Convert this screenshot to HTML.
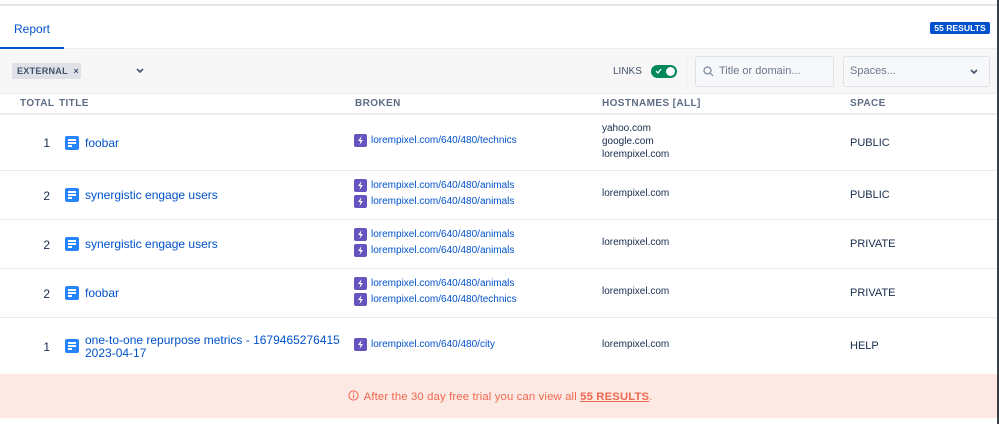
<!DOCTYPE html>
<html><head><meta charset="utf-8"><style>
*{margin:0;padding:0;box-sizing:border-box}
body{width:999px;height:424px;background:#fff;font-family:"Liberation Sans",sans-serif;position:relative;overflow:hidden;color:#172b4d}
.a{position:absolute}
.hl{position:absolute;left:0;width:997px;height:1px;background:#ebecf0}
.th{position:absolute;top:98px;font-size:10px;font-weight:bold;color:#5e6c84;letter-spacing:.4px}
.num{position:absolute;left:38px;width:12px;text-align:right;font-size:12px;color:#172b4d}
.doc{position:absolute;left:65px;width:14px;height:14px;background:#2684ff;border-radius:2px}
.doc:before{content:"";position:absolute;left:3px;top:3px;width:8px;height:2px;background:#fff;box-shadow:0 3px 0 #fff,0 6px 0 #fff}
.doc:after{content:"";position:absolute;left:7px;top:9px;width:4px;height:2px;background:#2684ff}
.t{position:absolute;left:85px;font-size:12px;color:#0052cc;line-height:13px}
.lk{position:absolute;left:354px;font-size:10px;color:#0052cc;height:13px;line-height:13px;padding-left:17px}
.lk:before{content:"";position:absolute;left:0;top:0;width:13px;height:13px;background:#6554c0;border-radius:2px}
.lk svg{position:absolute;left:3px;top:2px}
.h{position:absolute;left:602px;font-size:10px;color:#172b4d;line-height:13px}
.s{position:absolute;left:850px;font-size:11px;color:#172b4d}
</style></head><body>
<div class="a" style="left:0;top:4px;width:997px;height:2px;background:#e4e5e9"></div>
<div class="a" style="left:997px;top:0;width:2px;height:424px;background:#3a3f47"></div>
<div class="a" style="left:14px;top:22px;font-size:12px;color:#0052cc">Report</div>
<div class="a" style="left:930px;top:22px;width:60px;height:12px;background:#0052cc;border-radius:2px;color:#fff;font-size:8.6px;font-weight:bold;text-align:center;line-height:12px;white-space:nowrap">55 RESULTS</div>
<div class="a" style="left:0;top:48px;width:997px;height:45px;background:#f7f7f8;border-top:1px solid #ebecf0"></div>
<div class="a" style="left:0;top:47px;width:64px;height:2px;background:#0052cc"></div>
<div class="a" style="left:12px;top:63px;width:69px;height:16px;background:#dfe1e6;border-radius:2px;font-size:9px;font-weight:bold;color:#42526e;line-height:16px;padding-left:5px;letter-spacing:.3px">EXTERNAL <span style="margin-left:3px">×</span></div>
<svg class="a" style="left:136px;top:68px" width="8" height="6"><path d="M1 1l3 3 3-3" stroke="#42526e" stroke-width="1.6" fill="none"/></svg>
<div class="a" style="left:613px;top:66px;font-size:10px;color:#42526e">LINKS</div>
<div class="a" style="left:651px;top:65px;width:26px;height:13px;background:#00875a;border-radius:7px"></div>
<div class="a" style="left:666px;top:67px;width:9px;height:9px;background:#fff;border-radius:50%"></div>
<svg class="a" style="left:655px;top:68px" width="7" height="6"><path d="M1 3l2 2 3-4" stroke="#fff" stroke-width="1.3" fill="none"/></svg>
<div class="a" style="left:686px;top:55px;width:1px;height:34px;background:#ebecf0"></div>
<div class="a" style="left:695px;top:56px;width:139px;height:31px;border:1px solid #dfe1e6;background:#f7f8f9;border-radius:3px"></div>
<svg class="a" style="left:703px;top:66px" width="11" height="11"><circle cx="4.5" cy="4.5" r="3.5" stroke="#7a869a" stroke-width="1.2" fill="none"/><path d="M7 7l3 3" stroke="#7a869a" stroke-width="1.2"/></svg>
<div class="a" style="left:719px;top:65px;font-size:11px;color:#6b778c">Title or domain...</div>
<div class="a" style="left:843px;top:56px;width:147px;height:31px;border:1px solid #dfe1e6;background:#f7f8f9;border-radius:3px"></div>
<div class="a" style="left:850px;top:65px;font-size:11px;color:#6b778c">Spaces...</div>
<svg class="a" style="left:970px;top:69px" width="8" height="6"><path d="M1 1l3 3 3-3" stroke="#42526e" stroke-width="1.6" fill="none"/></svg>
<div class="hl" style="top:93px"></div>
<div class="th" style="left:20px">TOTAL</div><div class="th" style="left:59px">TITLE</div>
<div class="th" style="left:355px">BROKEN</div><div class="th" style="left:602px">HOSTNAMES [ALL]</div><div class="th" style="left:850px">SPACE</div>
<div class="hl" style="top:113px;height:2px"></div>

<div class="num" style="top:136px">1</div><div class="doc" style="top:136px"></div><div class="t" style="top:137px">foobar</div>
<div class="lk" style="top:134px"><svg width="7" height="9"><path d="M4.5 0L1 5h2.5L2.5 9 6 4H3.5z" fill="#fff"/></svg>lorempixel.com/640/480/technics</div>
<div class="h" style="top:122px">yahoo.com<br>google.com<br>lorempixel.com</div>
<div class="s" style="top:137px">PUBLIC</div>
<div class="hl" style="top:170px"></div>

<div class="num" style="top:189px">2</div><div class="doc" style="top:188px"></div><div class="t" style="top:189px">synergistic engage users</div>
<div class="lk" style="top:179px"><svg width="7" height="9"><path d="M4.5 0L1 5h2.5L2.5 9 6 4H3.5z" fill="#fff"/></svg>lorempixel.com/640/480/animals</div>
<div class="lk" style="top:195px"><svg width="7" height="9"><path d="M4.5 0L1 5h2.5L2.5 9 6 4H3.5z" fill="#fff"/></svg>lorempixel.com/640/480/animals</div>
<div class="h" style="top:187px">lorempixel.com</div>
<div class="s" style="top:189px">PUBLIC</div>
<div class="hl" style="top:219px"></div>

<div class="num" style="top:238px">2</div><div class="doc" style="top:237px"></div><div class="t" style="top:238px">synergistic engage users</div>
<div class="lk" style="top:228px"><svg width="7" height="9"><path d="M4.5 0L1 5h2.5L2.5 9 6 4H3.5z" fill="#fff"/></svg>lorempixel.com/640/480/animals</div>
<div class="lk" style="top:244px"><svg width="7" height="9"><path d="M4.5 0L1 5h2.5L2.5 9 6 4H3.5z" fill="#fff"/></svg>lorempixel.com/640/480/animals</div>
<div class="h" style="top:236px">lorempixel.com</div>
<div class="s" style="top:238px">PRIVATE</div>
<div class="hl" style="top:268px"></div>

<div class="num" style="top:287px">2</div><div class="doc" style="top:286px"></div><div class="t" style="top:287px">foobar</div>
<div class="lk" style="top:277px"><svg width="7" height="9"><path d="M4.5 0L1 5h2.5L2.5 9 6 4H3.5z" fill="#fff"/></svg>lorempixel.com/640/480/animals</div>
<div class="lk" style="top:293px"><svg width="7" height="9"><path d="M4.5 0L1 5h2.5L2.5 9 6 4H3.5z" fill="#fff"/></svg>lorempixel.com/640/480/technics</div>
<div class="h" style="top:285px">lorempixel.com</div>
<div class="s" style="top:287px">PRIVATE</div>
<div class="hl" style="top:317px"></div>

<div class="num" style="top:340px">1</div><div class="doc" style="top:339px"></div><div class="t" style="top:334px">one-to-one repurpose metrics - 1679465276415<br>2023-04-17</div>
<div class="lk" style="top:338px"><svg width="7" height="9"><path d="M4.5 0L1 5h2.5L2.5 9 6 4H3.5z" fill="#fff"/></svg>lorempixel.com/640/480/city</div>
<div class="h" style="top:338px">lorempixel.com</div>
<div class="s" style="top:340px">HELP</div>

<div class="a" style="left:0;top:374px;width:997px;height:44px;background:#fde9e4"></div>
<div class="a" style="left:348px;top:390px;font-size:11.3px;color:#f0684f;letter-spacing:.15px">
<svg width="11" height="11" style="vertical-align:-1px;margin-right:2px"><circle cx="5.5" cy="5.5" r="4.6" stroke="#f0684f" stroke-width="1" fill="none"/><path d="M5.5 5v3M5.5 2.8v1.2" stroke="#f0684f" stroke-width="1.1"/></svg>
After the 30 day free trial you can view all <b style="text-decoration:underline">55 RESULTS</b>.</div>
</body></html>
